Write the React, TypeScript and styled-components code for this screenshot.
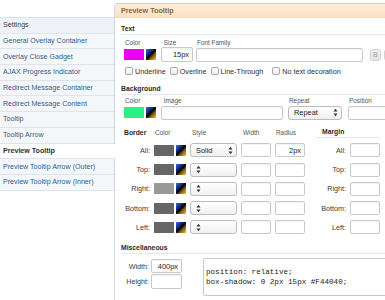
import React from "react";
import styled, { createGlobalStyle } from "styled-components";

const Global = createGlobalStyle`
  html, body { margin: 0; padding: 0; background: #fff; }
  body {
    font-family: "Liberation Sans", Arial, sans-serif;
    font-size: 7.2px;
    color: #333;
  }
  * { box-sizing: border-box; }
`;

const Page = styled.div`
  display: flex;
  align-items: flex-start;
  width: 385px;
  height: 300px;
  overflow: hidden;
`;

const Sidebar = styled.nav`
  flex: none;
  width: 114px;
  margin-top: 17px;
  display: flex;
  flex-direction: column;
  border-top: 1px solid #d9e1e9;
`;

const SideItem = styled.div<{ $kind?: "head" | "active" }>`
  height: 15.7px;
  display: flex;
  align-items: center;
  padding-left: 3px;
  white-space: nowrap;
  border-bottom: 1px solid #dde5ec;
  font-size: 7.1px;
  background: ${(p) => (p.$kind === "active" ? "#fff" : p.$kind === "head" ? "#eef2f6" : "#f4f7fa")};
  color: ${(p) => (p.$kind === "active" ? "#22313f" : p.$kind === "head" ? "#3a3f45" : "#2f5d8c")};
  font-weight: ${(p) => (p.$kind === "active" ? "bold" : "normal")};
  margin-right: ${(p) => (p.$kind === "active" ? "-1px" : "0")};
  position: ${(p) => (p.$kind === "active" ? "relative" : "static")};
  z-index: ${(p) => (p.$kind === "active" ? 1 : "auto")};
`;

const Main = styled.main`
  flex: none;
  width: 290px;
  min-height: 297px;
  margin-top: 3px;
  border-left: 1px solid #cfd9e3;
  border-top: 1px solid #d9cbbd;
  border-top-left-radius: 4px;
  overflow: hidden;
`;

const MainHeader = styled.div`
  height: 14px;
  display: flex;
  align-items: center;
  padding-left: 6px;
  background: linear-gradient(#fdecd8, #fbe1c4);
  border-bottom: 1px solid #f1d9bf;
  font-weight: bold;
  font-size: 7.2px;
  color: #8a6642;
`;

const Content = styled.div`
  padding-left: 6px;
`;

const SectionHead = styled.div<{ $mt: number }>`
  margin-top: ${(p) => p.$mt}px;
  height: 13px;
  display: flex;
  align-items: center;
  border-bottom: 1px solid #e2e8ef;
  font-weight: bold;
  font-size: 6.8px;
  color: #2a2a2a;
`;

const Indent = styled.div`
  padding-left: 3px;
`;

const FieldRow = styled.div<{ $mt: number }>`
  display: flex;
  align-items: flex-end;
  margin-top: ${(p) => p.$mt}px;
`;

const Field = styled.div<{ $w: number }>`
  flex: none;
  width: ${(p) => p.$w}px;
  display: flex;
  flex-direction: column;
`;

const FieldLabel = styled.div`
  height: 8px;
  line-height: 8px;
  padding-left: 1px;
  font-size: 6.4px;
  color: #555;
  white-space: nowrap;
`;

const Controls = styled.div`
  height: 15px;
  display: flex;
  align-items: center;
  gap: 2px;
`;

const TextInput = styled.input<{ $w: number; $h?: number; $align?: string }>`
  flex: none;
  width: ${(p) => p.$w}px;
  height: ${(p) => p.$h ?? 14}px;
  margin: 0;
  padding: 0 3px;
  border: 1px solid #c9c9c9;
  border-radius: 2px;
  background: #fff;
  box-shadow: inset 0 1px 1px rgba(0, 0, 0, 0.05);
  font-family: "Liberation Sans", Arial, sans-serif;
  font-size: 7.4px;
  color: #222;
  text-align: ${(p) => p.$align ?? "left"};
  outline: none;
`;

const Swatch = styled.span<{ $c: string }>`
  flex: none;
  width: 20px;
  height: 11px;
  background: ${(p) => p.$c};
`;

const Picker = styled.span`
  flex: none;
  width: 10px;
  height: 11px;
  background: linear-gradient(135deg, #3a6ae8 0%, #12286e 35%, #000 50%, #7a5a10 66%, #f2c634 100%);
`;

const SmallButton = styled.span<{ $ml: number }>`
  flex: none;
  width: 11px;
  height: 12px;
  margin-left: ${(p) => p.$ml}px;
  display: flex;
  align-items: center;
  justify-content: center;
  border: 1px solid #d2d2d2;
  border-radius: 3px;
  background: linear-gradient(#f3f3f3, #e4e4e4);
  font-weight: bold;
  font-size: 6.6px;
  color: #b2b2b2;
`;

const CheckRow = styled.div`
  margin-top: 4px;
  height: 10px;
  display: flex;
  align-items: center;
  gap: 4px;
  padding-left: 1px;
`;

const CheckLabel = styled.label<{ $ml?: number }>`
  display: flex;
  align-items: center;
  gap: 2px;
  margin-left: ${(p) => p.$ml ?? 0}px;
  font-size: 7.2px;
  color: #2e2e2e;
  white-space: nowrap;
`;

const Box = styled.span`
  flex: none;
  width: 8px;
  height: 8px;
  border: 1px solid #a9a9a9;
  border-radius: 2px;
  background: linear-gradient(#fff, #ececec);
`;

const SelectBox = styled.div<{ $w: number }>`
  flex: none;
  width: ${(p) => p.$w}px;
  height: 14px;
  display: flex;
  align-items: center;
  justify-content: space-between;
  padding: 0 3px 0 5px;
  border: 1px solid #bcbcbc;
  border-radius: 3px;
  background: linear-gradient(#fff, #f0f0f0);
  font-size: 7.4px;
  color: #222;
`;

const BorderWrap = styled.div`
  display: flex;
  margin-top: 6px;
`;

const BorderGrid = styled.div`
  display: grid;
  grid-template-columns: 29px 32px 47px 30px 30px;
  grid-template-rows: 12px repeat(5, 14px);
  column-gap: 4px;
  row-gap: 5.25px;
  align-items: center;
`;

const MarginGrid = styled.div`
  margin-left: 11px;
  display: grid;
  grid-template-columns: 30px 30px;
  grid-template-rows: 12px repeat(5, 14px);
  column-gap: 4px;
  row-gap: 5.25px;
  align-items: center;
`;

const ColHead = styled.div<{ $bold?: boolean; $pl?: number }>`
  padding-left: ${(p) => p.$pl ?? 1}px;
  font-size: ${(p) => (p.$bold ? "6.8px" : "6.4px")};
  font-weight: ${(p) => (p.$bold ? "bold" : "normal")};
  color: ${(p) => (p.$bold ? "#2a2a2a" : "#555")};
  white-space: nowrap;
`;

const MarginHead = styled.div`
  grid-column: 1 / span 2;
  height: 12px;
  display: flex;
  align-items: center;
  padding-left: 6px;
  border-bottom: 1px solid #e2e8ef;
  font-weight: bold;
  font-size: 6.8px;
  color: #2a2a2a;
  align-self: stretch;
`;

const RowLabel = styled.div`
  text-align: right;
  font-size: 7.2px;
  color: #3a3a3a;
  white-space: nowrap;
`;

const ColorCell = styled.div`
  display: flex;
  align-items: center;
  gap: 2px;
`;

const MiscRow = styled.div`
  display: flex;
  align-items: flex-start;
  margin-top: 4px;
`;

const MiscGrid = styled.div`
  padding-top: 1px;
  display: grid;
  grid-template-columns: 28px 31px;
  grid-template-rows: 14px 15px;
  column-gap: 2px;
  row-gap: 1px;
  align-items: center;
`;

const CodeArea = styled.textarea`
  flex: none;
  margin: 0 0 0 21px;
  width: 200px;
  height: 38px;
  padding: 8px 2px;
  border: 1px solid #c9c9c9;
  border-radius: 2px;
  font-family: "Liberation Mono", "DejaVu Sans Mono", monospace;
  font-size: 7.6px;
  line-height: 10px;
  color: #222;
  resize: none;
  overflow: hidden;
  white-space: pre;
  outline: none;
`;

const Arrows = () => (
  <svg width="5" height="9" viewBox="0 0 5 9">
    <path d="M0.5 3.5 L2.5 0.8 L4.5 3.5 Z M0.5 5.5 L2.5 8.2 L4.5 5.5 Z" fill="#333" />
  </svg>
);

const navItems = [
  "General Overlay Container",
  "Overlay Close Gadget",
  "AJAX Progress Indicator",
  "Redirect Message Container",
  "Redirect Message Content",
  "Tooltip",
  "Tooltip Arrow",
];

const borderRows = [
  { label: "All:", color: "#666", style: "Solid", radius: "2px" },
  { label: "Top:", color: "#666", style: "", radius: "" },
  { label: "Right:", color: "#999", style: "", radius: "" },
  { label: "Bottom:", color: "#666", style: "", radius: "" },
  { label: "Left:", color: "#666", style: "", radius: "" },
];

export default function App() {
  return (
    <>
      <Global />
      <Page>
        <Sidebar>
          <SideItem $kind="head">Settings</SideItem>
          {navItems.map((n) => (
            <SideItem key={n}>{n}</SideItem>
          ))}
          <SideItem $kind="active">Preview Tooltip</SideItem>
          <SideItem>Preview Tooltip Arrow (Outer)</SideItem>
          <SideItem>Preview Tooltip Arrow (Inner)</SideItem>
        </Sidebar>

        <Main>
          <MainHeader>Preview Tooltip</MainHeader>
          <Content>
            <SectionHead $mt={4}>Text</SectionHead>
            <Indent>
              <FieldRow $mt={4}>
                <Field $w={37}>
                  <FieldLabel>Color</FieldLabel>
                  <Controls>
                    <Swatch $c="#ee00ee" />
                    <Picker />
                  </Controls>
                </Field>
                <Field $w={35}>
                  <FieldLabel>&nbsp;Size</FieldLabel>
                  <Controls>
                    <TextInput $w={32} $h={15} $align="right" readOnly value="15px" />
                  </Controls>
                </Field>
                <Field $w={167}>
                  <FieldLabel>Font Family</FieldLabel>
                  <Controls>
                    <TextInput $w={167} $h={14} readOnly value="" />
                  </Controls>
                </Field>
                <Field $w={40}>
                  <FieldLabel />
                  <Controls>
                    <SmallButton $ml={7}>B</SmallButton>
                    <SmallButton $ml={1} />
                  </Controls>
                </Field>
              </FieldRow>
              <CheckRow>
                <CheckLabel><Box />Underline</CheckLabel>
                <CheckLabel><Box />Overline</CheckLabel>
                <CheckLabel><Box />Line-Through</CheckLabel>
                <CheckLabel $ml={5}><Box />No text decoration</CheckLabel>
              </CheckRow>
            </Indent>

            <SectionHead $mt={6}>Background</SectionHead>
            <Indent>
              <FieldRow $mt={2}>
                <Field $w={37}>
                  <FieldLabel>Color</FieldLabel>
                  <Controls>
                    <Swatch $c="#2cf086" />
                    <Picker />
                  </Controls>
                </Field>
                <Field $w={127}>
                  <FieldLabel>&nbsp;Image</FieldLabel>
                  <Controls>
                    <TextInput $w={122} readOnly value="" />
                  </Controls>
                </Field>
                <Field $w={60}>
                  <FieldLabel>Repeat</FieldLabel>
                  <Controls>
                    <SelectBox $w={54}>
                      Repeat
                      <Arrows />
                    </SelectBox>
                  </Controls>
                </Field>
                <Field $w={60}>
                  <FieldLabel>Position</FieldLabel>
                  <Controls>
                    <TextInput $w={50} readOnly value="" />
                  </Controls>
                </Field>
              </FieldRow>
            </Indent>

            <BorderWrap>
              <BorderGrid>
                <ColHead $bold $pl={3}>Border</ColHead>
                <ColHead>Color</ColHead>
                <ColHead $pl={2}>Style</ColHead>
                <ColHead $pl={2}>Width</ColHead>
                <ColHead>Radius</ColHead>
                {borderRows.map((r) => (
                  <React.Fragment key={r.label}>
                    <RowLabel>{r.label}</RowLabel>
                    <ColorCell>
                      <Swatch $c={r.color} />
                      <Picker />
                    </ColorCell>
                    <SelectBox $w={47}>
                      {r.style}
                      <Arrows />
                    </SelectBox>
                    <TextInput $w={30} readOnly value="" />
                    <TextInput $w={30} $align="right" readOnly value={r.radius} />
                  </React.Fragment>
                ))}
              </BorderGrid>
              <MarginGrid>
                <MarginHead>Margin</MarginHead>
                {borderRows.map((r) => (
                  <React.Fragment key={r.label}>
                    <RowLabel>{r.label}</RowLabel>
                    <TextInput $w={30} readOnly value="" />
                  </React.Fragment>
                ))}
              </MarginGrid>
            </BorderWrap>

            <SectionHead $mt={7}>Miscellaneous</SectionHead>
            <MiscRow>
              <MiscGrid>
                <RowLabel>Width:</RowLabel>
                <TextInput $w={31} $align="right" readOnly value="400px" />
                <RowLabel>Height:</RowLabel>
                <TextInput $w={31} $h={15} readOnly value="" />
              </MiscGrid>
              <CodeArea readOnly value={"position: relative;\nbox-shadow: 0 2px 15px #F44040;"} />
            </MiscRow>
          </Content>
        </Main>
      </Page>
    </>
  );
}
